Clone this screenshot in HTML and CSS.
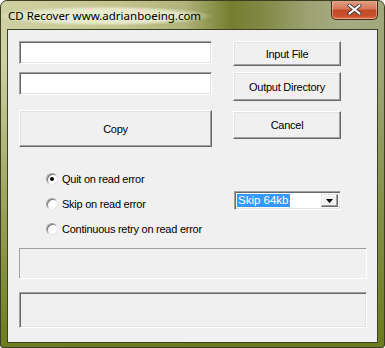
FILE: index.html
```html
<!DOCTYPE html>
<html>
<head>
<meta charset="utf-8">
<link rel="stylesheet" href="styles.css">
</head>
<body>
<div class="window">
  <div class="titlebar">
    <span class="title">CD Recover www.adrianboeing.com</span>
    <div class="close">
      <svg width="17" height="11" viewBox="0 0 17 11"><path d="M3.5 1.5 L13.5 9.5 M13.5 1.5 L3.5 9.5" stroke="#3a3a3a" stroke-width="4" stroke-linecap="round"/><path d="M3.5 1.5 L13.5 9.5 M13.5 1.5 L3.5 9.5" stroke="#fff" stroke-width="2.2" stroke-linecap="round"/></svg>
    </div>
  </div>
  <div class="client">
    <div class="top">
      <div class="col-left">
        <div class="textbox"></div>
        <div class="textbox tb2"></div>
        <div class="btn copy">Copy</div>
      </div>
      <div class="col-right">
        <div class="btn b-input">Input File</div>
        <div class="btn b-output">Output Directory</div>
        <div class="btn b-cancel">Cancel</div>
      </div>
    </div>
    <div class="options">
      <div class="radios">
        <div class="radio-row"><span class="radio checked"></span><span>Quit on read error</span></div>
        <div class="radio-row"><span class="radio"></span><span>Skip on read error</span></div>
        <div class="radio-row"><span class="radio"></span><span>Continuous retry on read error</span></div>
      </div>
      <div class="combo">
        <div class="combo-text"><span class="sel">Skip 64kb</span><span class="caret"></span></div>
        <div class="combo-btn"><svg width="7" height="4" viewBox="0 0 7 4"><path d="M0 0 H7 L3.5 4 Z" fill="#000"/></svg></div>
      </div>
    </div>
    <div class="status etched"></div>
    <div class="status sunken"></div>
  </div>
</div>
</body>
</html>
```
FILE: styles.css
```css
html, body { margin: 0; padding: 0; background: #fff; }
.window {
  width: 385px; height: 348px; box-sizing: border-box;
  border: 1px solid #3b3f1e;
  border-radius: 7px 7px 3px 3px;
  padding: 0 6px 4px 6px;
  display: flex; flex-direction: column;
  overflow: hidden;
  background:
    linear-gradient(to bottom, rgba(110,125,30,0) 0px, rgba(110,125,30,0) 60px, rgba(112,128,32,0.55) 200px, #6c7b1d 100%),
    linear-gradient(to right, #cfd1a4 0%, #c3c590 30%, #b0b37a 48%, #747e2e 60%, #808845 68%, #9ca272 80%, #a6ac83 90%, #9fa67a 100%);
  font-family: "Liberation Sans", Arial, sans-serif;
}
.titlebar {
  height: 28px; flex: none;
  display: flex; align-items: flex-start;
}
.title {
  font-family: "Noto Sans", "Open Sans", sans-serif;
  font-size: 11.5px; color: #000;
  margin-top: 5px; margin-left: -10px;
  padding: 2px 12px 3px 11px;
  line-height: 15px;
  background: radial-gradient(ellipse closest-side, rgba(236,238,212,0.95) 0%, rgba(236,238,212,0.85) 70%, rgba(236,238,212,0) 100%);
}
.close {
  margin-left: auto; margin-top: -1px;
  width: 47px; height: 20px; box-sizing: border-box;
  border: 1px solid #4a2a1c; border-top: none;
  border-radius: 0 0 5px 5px;
  background: linear-gradient(to bottom, #e7a48c 0%, #d6785a 45%, #c24a26 55%, #c9502c 85%, #dd7a50 100%);
  box-shadow: inset 0 0 0 1px rgba(255,220,200,0.45);
  display: flex; align-items: center; justify-content: center;
}
.client {
  flex: 1;
  border: 1px solid #3d4121;
  background: #f0f0f0;
  font-size: 11px; color: #000;
  letter-spacing: -0.25px;
  padding: 11px 0 0 11px;
  display: flex; flex-direction: column;
}
.top {
  display: grid; grid-template-columns: 193px 108px; column-gap: 21px;
}
.col-left, .col-right { display: flex; flex-direction: column; }
.textbox {
  height: 23px; box-sizing: border-box; background: #fff;
  border: 1px solid; border-color: #a0a0a0 #fff #fff #a0a0a0;
  box-shadow: inset 1px 1px #696969, inset -1px -1px #e3e3e3;
}
.tb2 { margin-top: 8px; }
.btn {
  box-sizing: border-box; background: #f0f0f0;
  border: 1px solid; border-color: #fff #696969 #696969 #fff;
  box-shadow: inset -1px -1px #a0a0a0, inset 1px 1px #e3e3e3;
  display: flex; align-items: center; justify-content: center;
}
.copy { height: 37px; margin-top: 15px; }
.b-input { height: 25px; }
.b-output { height: 29px; margin-top: 6px; }
.b-cancel { height: 28px; margin-top: 10px; }
.options {
  margin-top: 19px; padding-left: 27px;
  display: flex; align-items: flex-start;
}
.radios { width: 188px; display: flex; flex-direction: column; }
.radio-row { height: 25px; display: flex; align-items: center; gap: 4px; }
.radio {
  width: 12px; height: 12px; box-sizing: border-box; border-radius: 50%;
  border: 1px solid; border-color: #a0a0a0 #e6e6e6 #e6e6e6 #a0a0a0;
  background: #fff;
  box-shadow: inset 1px 1px #777;
  display: flex; align-items: center; justify-content: center;
  margin-top: 1px;
}
.radio.checked::after {
  content: ""; width: 4px; height: 4px; border-radius: 50%; background: #000;
}
.combo {
  margin-top: 25px; width: 107px; height: 19px; box-sizing: border-box;
  background: #fff;
  border: 1px solid; border-color: #a0a0a0 #fff #fff #a0a0a0;
  box-shadow: inset 1px 1px #696969, inset -1px -1px #e3e3e3;
  padding: 2px;
  display: flex;
}
.combo-text { flex: 1; display: flex; align-items: center; }
.sel { background: #3399ff; color: #fff; line-height: 13px; padding: 0 0 0 1px; font-size: 11.5px; letter-spacing: 0; }
.caret { width: 1px; height: 13px; background: #e07020; }
.combo-btn {
  width: 17px; box-sizing: border-box; background: #f0f0f0;
  border: 1px solid; border-color: #e3e3e3 #696969 #696969 #e3e3e3;
  box-shadow: inset -1px -1px #a0a0a0, inset 1px 1px #fff;
  display: flex; align-items: center; justify-content: center;
}
.status { width: 348px; box-sizing: border-box; }
.etched {
  margin-top: 7px; height: 31px;
  border: 1px solid; border-color: #a0a0a0 #fff #fff #a0a0a0;
}
.sunken {
  margin-top: 13px; height: 36px;
  border: 1px solid; border-color: #a0a0a0 #fff #fff #a0a0a0;
  box-shadow: inset 1px 1px #696969, inset -1px -1px #e3e3e3;
}
```
